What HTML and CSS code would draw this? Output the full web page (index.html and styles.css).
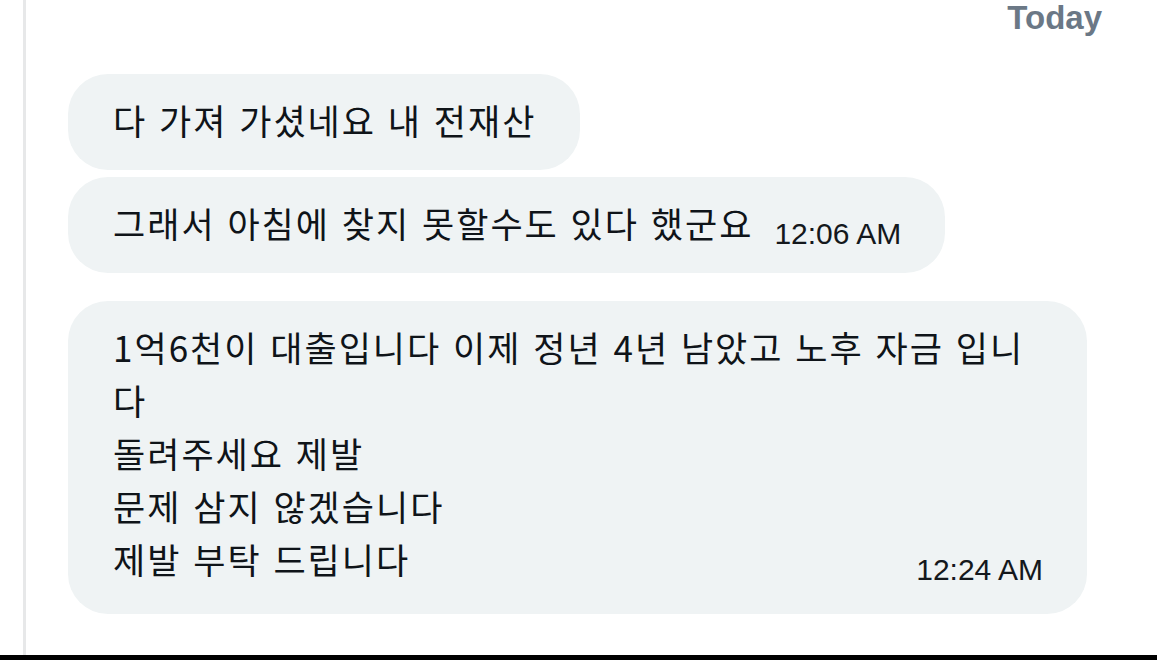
FILE: index.html
```html
<!DOCTYPE html>
<html lang="ko">
<head>
<meta charset="utf-8">
<link rel="stylesheet" href="styles.css">
</head>
<body>
<div class="screen">
  <div class="thread">
    <div class="day-row"><span class="day">Today</span></div>
    <div class="groups">
      <div class="group">
        <div class="bubble"><span class="text">다 가져 가셨네요 내 전재산</span></div>
        <div class="bubble">
          <div class="row">
            <span class="text">그래서 아침에 찾지 못할수도 있다 했군요</span>
            <span class="time">12:06 AM</span>
          </div>
        </div>
      </div>
      <div class="group">
        <div class="bubble">
          <div class="text block">1억6천이 대출입니다 이제 정년 4년 남았고 노후 자금 입니다
돌려주세요 제발
문제 삼지 않겠습니다</div>
          <div class="row spread">
            <span class="text">제발 부탁 드립니다</span>
            <span class="time">12:24 AM</span>
          </div>
        </div>
      </div>
    </div>
  </div>
  <div class="bottom-bar"></div>
</div>
</body>
</html>
```
FILE: styles.css
```css
html, body {
  margin: 0;
  padding: 0;
  background: #ffffff;
}
body {
  width: 1157px;
  height: 660px;
  overflow: hidden;
}
.screen {
  display: flex;
  flex-direction: column;
  height: 660px;
}
.thread {
  flex: 1;
  margin-left: 23px;
  border-left: 3px solid #e7e8e9;
  padding-left: 42px;
  padding-right: 55px;
  display: flex;
  flex-direction: column;
}
.day-row {
  display: flex;
  justify-content: flex-end;
  height: 74px;
}
.day {
  font-family: "Liberation Sans", Arial, sans-serif;
  font-weight: 700;
  font-size: 33px;
  line-height: 36px;
  color: #6b7886;
}
.groups {
  display: flex;
  flex-direction: column;
  gap: 28px;
}
.group {
  display: flex;
  flex-direction: column;
  align-items: flex-start;
  gap: 7px;
}
.bubble {
  background: #eff3f4;
  border-radius: 40px;
  padding: 19px 44px 24px 45px;
  max-width: 930px;
  font-family: "Noto Sans CJK KR", "Noto Sans", sans-serif;
  font-size: 35px;
  line-height: 53px;
  letter-spacing: 2px;
  color: #0f1419;
}
.group + .group .bubble {
  padding-bottom: 29px;
}
.text {
  white-space: normal;
}
.block {
  white-space: pre-line;
}
.row {
  display: flex;
  align-items: flex-end;
  gap: 21px;
}
.spread {
  justify-content: space-between;
}
.time {
  font-family: "Liberation Sans", Arial, sans-serif;
  font-size: 30px;
  line-height: 30px;
  letter-spacing: 0;
  color: #14181c;
  white-space: nowrap;
}
.bottom-bar {
  height: 5px;
  background: #000000;
}
```
